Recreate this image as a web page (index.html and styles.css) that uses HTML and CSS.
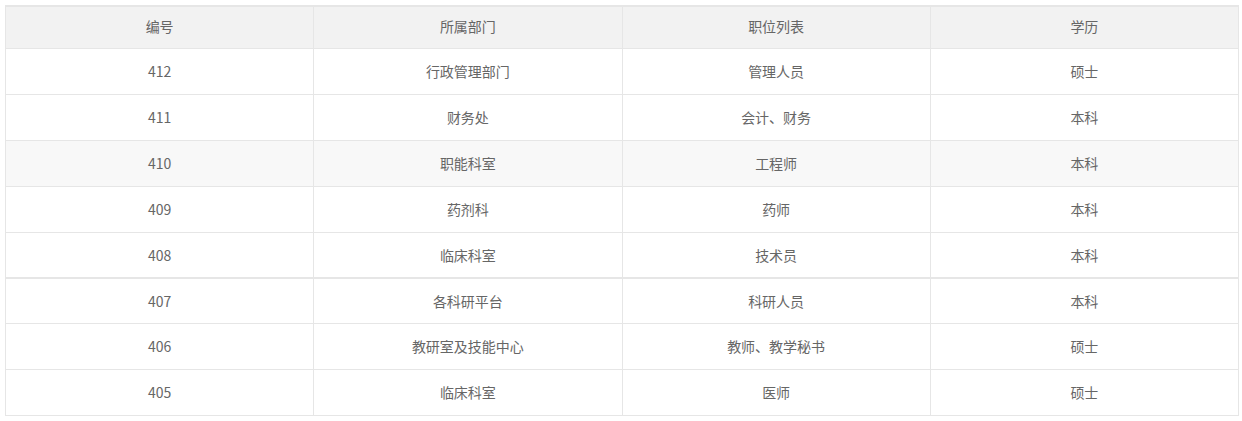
FILE: index.html
```html
<!DOCTYPE html>
<html lang="zh-CN">
<head>
<meta charset="utf-8">
<title>职位列表</title>
<link rel="stylesheet" href="styles.css">
</head>
<body>
<div class="table-wrap">
  <table class="data-table">
    <thead>
      <tr><th>编号</th><th>所属部门</th><th>职位列表</th><th>学历</th></tr>
    </thead>
    <tbody>
      <tr><td>412</td><td>行政管理部门</td><td>管理人员</td><td>硕士</td></tr>
      <tr><td>411</td><td>财务处</td><td>会计、财务</td><td>本科</td></tr>
      <tr class="hover"><td>410</td><td>职能科室</td><td>工程师</td><td>本科</td></tr>
      <tr><td>409</td><td>药剂科</td><td>药师</td><td>本科</td></tr>
      <tr class="split"><td>408</td><td>临床科室</td><td>技术员</td><td>本科</td></tr>
      <tr class="after-split"><td>407</td><td>各科研平台</td><td>科研人员</td><td>本科</td></tr>
      <tr><td>406</td><td>教研室及技能中心</td><td>教师、教学秘书</td><td>硕士</td></tr>
      <tr><td>405</td><td>临床科室</td><td>医师</td><td>硕士</td></tr>
    </tbody>
  </table>
</div>
</body>
</html>
```
FILE: styles.css
```css
html, body {
  margin: 0;
  padding: 0;
  background: #fff;
}
body {
  font-family: "Noto Sans CJK SC", "Noto Sans", sans-serif;
  font-size: 14px;
  color: #666;
}
.table-wrap {
  padding: 5px 0 0 5px;
}
.data-table {
  width: 1234px;
  table-layout: fixed;
  border-collapse: separate;
  border-spacing: 0;
  border-top: 2px solid #e6e6e6;
  border-left: 1px solid #e6e6e6;
}
.data-table th,
.data-table td {
  box-sizing: border-box;
  border: 0;
  border-right: 1px solid #e6e6e6;
  border-bottom: 1px solid #e6e6e6;
  text-align: center;
  font-weight: normal;
  padding: 0 15px 1px;
  line-height: 20px;
}
.data-table th {
  height: 42px;
  padding-bottom: 3px;
  background: #f2f2f2;
}
.data-table td {
  height: 46px;
}
.data-table tr.hover td {
  background: #f8f8f8;
}
.data-table tr.split td {
  border-bottom-width: 2px;
}
.data-table tr.after-split td {
  height: 45px;
}
```
